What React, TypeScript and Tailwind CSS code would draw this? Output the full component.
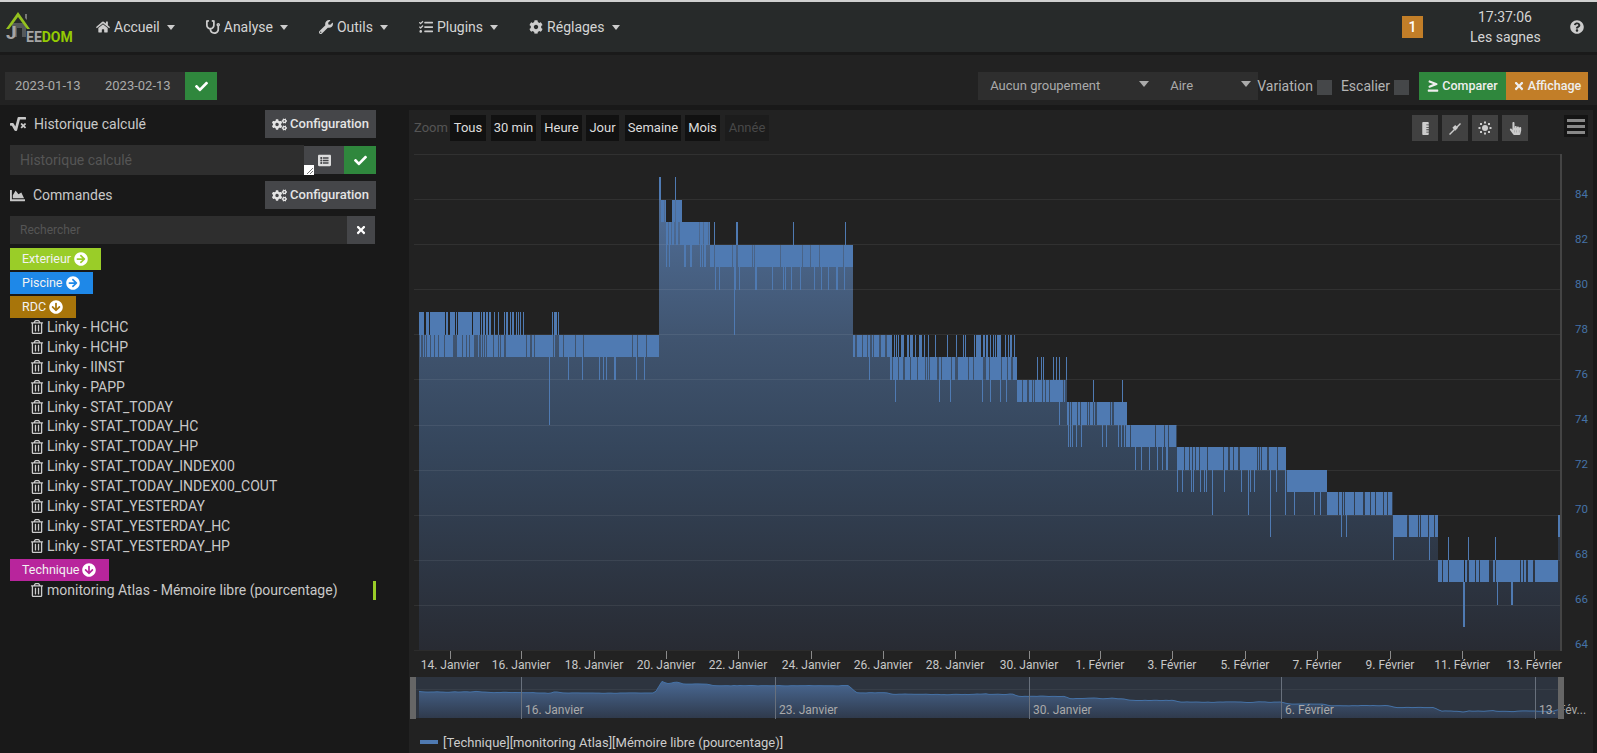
import {
  FaArrowCircleDown,
  FaArrowCircleRight,
  FaChartArea,
  FaCheck,
  FaCog,
  FaCogs,
  FaGreaterThanEqual,
  FaHandPointer,
  FaHome,
  FaListAlt,
  FaQuestionCircle,
  FaRegTrashAlt,
  FaRulerVertical,
  FaSquareRootAlt,
  FaStethoscope,
  FaTasks,
  FaTimes,
  FaWrench,
} from "react-icons/fa"
import type { ReactNode } from "react"

const yOf = (v: number) => 649.6 - (v - 64) * 22.5

// x0, x1, level, main band, tooth above, spike below
const segments: [number, number, number, number, number, number][] = [
  [419, 485, 78, 0.55, 0.8, 0],
  [485, 524, 78, 0.8, 0.4, 0],
  [524, 552, 78, 0.8, 0.02, 0],
  [552, 559, 78, 0.5, 0.9, 0],
  [559, 659, 78, 0.93, 0, 0.06],
  [659, 666, 84, 0.95, 0, 0.5],
  [666, 672, 83, 0.9, 0, 0.5],
  [672, 682, 84, 0.95, 0, 0.6],
  [682, 710, 83, 0.85, 0, 0.5],
  [710, 853, 82, 0.93, 0.02, 0.12],
  [853, 858, 78, 0.5, 0, 0],
  [858, 890, 78, 0.9, 0, 0.25],
  [890, 1017, 77, 0.85, 0.3, 0.06],
  [1017, 1067, 76, 0.85, 0.1, 0.1],
  [1067, 1127, 75, 0.75, 0.05, 0.2],
  [1127, 1177, 74, 0.85, 0, 0.2],
  [1177, 1286, 73, 0.85, 0, 0.12],
  [1286, 1327, 72, 0.96, 0, 0.05],
  [1327, 1393, 71, 0.85, 0, 0.05],
  [1393, 1438, 70, 0.85, 0, 0.04],
  [1438, 1558, 68, 0.9, 0, 0.05],
  [1558, 1560, 70, 1, 0, 0],
]

// single columns read off the picture: x, high, low
const spikes: [number, number, number][] = [
  [549, 78, 74], [734, 82, 78], [659, 85, 84], [660, 85, 84], [675, 85, 84], [714, 83, 82], [736, 83, 82], [737, 83, 82],
  [1177, 73, 71], [1193, 73, 71], [1212, 73, 70], [1248, 73, 70], [1270, 73, 69], [1285, 73, 70], [1346, 71, 69],
  [1393, 70, 68], [1429, 70, 68], [1448, 69, 68], [1468, 69, 68], [1495, 69, 68], [1463, 68, 65], [1464, 67, 65],
  [1489, 68, 68], [1490, 68, 68], [1491, 68, 68], [1492, 68, 68],
]

function buildSeries() {
  let seed = 20230213
  const rnd = () => {
    seed = (seed + 0x6d2b79f5) | 0
    let t = Math.imul(seed ^ (seed >>> 15), 1 | seed)
    t = (t + Math.imul(t ^ (t >>> 7), 61 | t)) ^ t
    return ((t ^ (t >>> 14)) >>> 0) / 4294967296
  }
  const cols: { x: number; hi: number; lo: number }[] = []
  for (const [x0, x1, level, main, up, down] of segments) {
    for (let x = x0; x < x1; x++) {
      let hi = level
      let lo = level
      if (rnd() < main) lo = level - 1
      if (rnd() < up) hi = level + 1
      if (lo < level && rnd() < down) lo = level - 2
      const spike = spikes.find((s) => s[0] === x)
      if (spike) {
        hi = spike[1]
        lo = spike[2]
      }
      cols.push({ x, hi, lo })
    }
  }
  let fill = ""
  let line = ""
  for (const c of cols) {
    const top = yOf(c.hi).toFixed(1)
    fill += `M${c.x} ${top}H${c.x + 1}V650H${c.x}Z`
    if (c.hi !== c.lo) line += `M${c.x + 0.5} ${top}V${yOf(c.lo).toFixed(1)}`
  }
  let nav = "M419 718"
  for (let i = 0; i < cols.length; i += 3) {
    const part = cols.slice(Math.max(0, i - 3), i + 4)
    const v = part.reduce((a, c) => a + (c.hi + c.lo) / 2, 0) / part.length
    nav += `L${cols[i].x} ${(693 - (v - 77.5) * 1.83).toFixed(1)}`
  }
  const navLine = nav.replace("M419 718L", "M")
  return { fill, line, nav: nav + "L1558 718Z", navLine }
}

const series = buildSeries()

const grid = [154, 199, 244, 289, 334, 379, 425, 470, 515, 560, 605]
const yLabels = [84, 82, 80, 78, 76, 74, 72, 70, 68, 66, 64]
const xLabels: [number, string][] = [
  [450, "14. Janvier"], [521, "16. Janvier"], [594, "18. Janvier"], [666, "20. Janvier"], [738, "22. Janvier"],
  [811, "24. Janvier"], [883, "26. Janvier"], [955, "28. Janvier"], [1029, "30. Janvier"], [1100, "1. Février"],
  [1172, "3. Février"], [1245, "5. Février"], [1317, "7. Février"], [1390, "9. Février"], [1462, "11. Février"],
  [1534, "13. Février"],
]
const navLabels: [number, string][] = [
  [521, "16. Janvier"], [775, "23. Janvier"], [1029, "30. Janvier"], [1281, "6. Février"], [1535, "13. Fév..."],
]

const linky = [
  "HCHC", "HCHP", "IINST", "PAPP", "STAT_TODAY", "STAT_TODAY_HC", "STAT_TODAY_HP", "STAT_TODAY_INDEX00",
  "STAT_TODAY_INDEX00_COUT", "STAT_YESTERDAY", "STAT_YESTERDAY_HC", "STAT_YESTERDAY_HP",
]

function Caret() {
  return <span className="ml-[7px] mt-[1px] border-x-[4px] border-t-[5px] border-x-transparent border-t-[#ccc]" />
}

function NavItem({ icon, label }: { icon: ReactNode; label: string }) {
  return (
    <div className="flex items-center text-[14px] text-[#d4d4d4]">
      <span className="mr-[4px] text-[14px] text-[#ccc]">{icon}</span>
      {label}
      <Caret />
    </div>
  )
}

function Logo() {
  return (
    <div className="relative h-[32px] w-[90px]">
      <svg width="30" height="32" viewBox="0 0 30 32">
        <path d="M6 12h14v14H6z" fill="#55595a" />
        <path d="M11 17h5v9h-5z" fill="#272a2a" />
        <path d="M0 18L12 1l12 17-3 0-9-12-9 12z" fill="#94c11f" />
        <path d="M19 3h2v6l-2-2z" fill="#777" />
      </svg>
      <span className="absolute left-[0px] top-[11px] text-[19px] font-bold leading-[22px] text-[#a5a5a5]">J</span>
      <span className="absolute left-[20px] top-[19px] text-[14px] font-bold leading-[14px]">
        <span className="text-[#a5a5a5]">EE</span>
        <span className="text-[#94ca02]">DOM</span>
      </span>
    </div>
  )
}

function ConfigButton() {
  return (
    <div className="flex h-[28px] w-[111px] items-center justify-center gap-[3px] bg-[#454649] text-[13px] font-medium text-[#e4e4e4]">
      <FaCogs className="text-[15px]" />
      Configuration
    </div>
  )
}

function Tag({ color, label, open }: { color: string; label: string; open?: boolean }) {
  return (
    <div className={`flex h-[22px] w-fit items-center gap-[3px] pl-[12px] pr-[13px] text-[12.5px] text-[#f2f2f2] ${color}`}>
      {label}
      {open ? <FaArrowCircleDown className="text-[14px] text-white" /> : <FaArrowCircleRight className="text-[14px] text-white" />}
    </div>
  )
}

function Cmd({ label, tall }: { label: string; tall?: boolean }) {
  return (
    <div className={`flex items-center pl-[20px] text-[14px] text-[#c8c8c8] ${tall ? "h-[19px]" : "h-[19.9px]"}`}>
      <FaRegTrashAlt className="mr-[3px] text-[14px] text-[#ccc]" />
      {label}
    </div>
  )
}

function RangeButton({ label, width, off }: { label: string; width: string; off?: boolean }) {
  return (
    <div className={`flex h-[26px] items-center justify-center text-[13px] ${width} ${off ? "bg-[#1c1c1c] text-[#484848]" : "bg-[#111] text-[#ddd]"}`}>
      {label}
    </div>
  )
}

function ToolButton({ children }: { children: ReactNode }) {
  return <div className="flex h-[26px] w-[26px] items-center justify-center bg-[#414141] text-[13px] text-[#ccc]">{children}</div>
}

function Chart() {
  return (
    <svg width="1184" height="603" viewBox="409 150 1184 603" className="block">
      <defs>
        <linearGradient id="area" gradientUnits="userSpaceOnUse" x1="0" y1="180" x2="0" y2="650">
          <stop offset="0" stopColor="#52729e" />
          <stop offset="0.34" stopColor="#40546f" />
          <stop offset="0.57" stopColor="#35465c" />
          <stop offset="1" stopColor="#282b33" />
        </linearGradient>
        <linearGradient id="navArea" gradientUnits="userSpaceOnUse" x1="0" y1="680" x2="0" y2="718">
          <stop offset="0" stopColor="#4a6a96" />
          <stop offset="1" stopColor="#2f3a4c" />
        </linearGradient>
      </defs>
      <path d={series.fill} fill="url(#area)" shapeRendering="crispEdges" />
      {grid.map((y) => (
        <rect key={y} x="414" y={y} width="1146" height="1" fill="#fff" fillOpacity="0.07" />
      ))}
      <path d={series.line} stroke="#4f7ab2" strokeWidth="1" fill="none" shapeRendering="crispEdges" />
      <rect x="1560" y="154" width="2" height="497" fill="#444" />
      <rect x="414" y="650" width="1146" height="1" fill="#2c2c2c" />
      {yLabels.map((v) => (
        <text key={v} x="1588" y={yOf(v) - 2} textAnchor="end" fontSize="11.5" fill="#4572a7">
          {v}
        </text>
      ))}
      {xLabels.map(([x, label]) => (
        <g key={label}>
          <rect x={x} y="651" width="1" height="8" fill="#8a8a8a" />
          <text x={x} y="669" textAnchor="middle" fontSize="12" fill="#c8c8c8">
            {label}
          </text>
        </g>
      ))}

      <rect x="416" y="677" width="1142" height="41" fill="#2d343f" />
      <rect x="416" y="689" width="1142" height="1" fill="#fff" fillOpacity="0.05" />
      <path d={series.nav} fill="url(#navArea)" />
      <path d={series.navLine} stroke="#4572a7" fill="none" />
      {navLabels.map(([x, label]) => (
        <g key={label}>
          <rect x={x} y="677" width="1" height="42" fill="#68707c" />
          <text x={x + 4} y="714" fontSize="12" fill="#aaa">
            {label}
          </text>
        </g>
      ))}
      <rect x="410" y="677" width="6" height="42" fill="#666" />
      <rect x="1558" y="677" width="6" height="42" fill="#666" />

      <rect x="420" y="740" width="18" height="4" fill="#4f7ab2" />
      <text x="443" y="746.5" fontSize="13" fill="#ccc">
        [Technique][monitoring Atlas][Mémoire libre (pourcentage)]
      </text>
    </svg>
  )
}

export default function App() {
  return (
    <div className="flex h-[753px] w-[1597px] flex-col overflow-hidden bg-[#191919] font-['Roboto',sans-serif]">
      <div className="h-[2px] bg-[#d0d0d0]" />

      {/* navbar */}
      <div className="flex h-[50px] items-center bg-[#272a2a] pl-[6px]">
        <Logo />
        <div className="flex gap-[31px]">
          <NavItem icon={<FaHome />} label="Accueil" />
          <NavItem icon={<FaStethoscope />} label="Analyse" />
          <NavItem icon={<FaWrench />} label="Outils" />
          <NavItem icon={<FaTasks />} label="Plugins" />
          <NavItem icon={<FaCog />} label="Réglages" />
        </div>
        <div className="ml-auto flex h-[22px] w-[21px] items-center justify-center bg-[#c27e28] text-[14px] font-medium text-white">1</div>
        <div className="ml-[47px] w-[70px] text-center text-[14px] leading-[20px] text-[#d4d4d4]">
          <div>17:37:06</div>
          <div className="whitespace-nowrap">Les sagnes</div>
        </div>
        <FaQuestionCircle className="ml-[30px] mr-[13px] text-[14px] text-[#ccc]" />
      </div>
      <div className="h-[3px] bg-[#1a1a1a]" />

      {/* period and display options */}
      <div className="flex h-[50px] items-start bg-[#222] pl-[5px] pr-[9px] pt-[17px] text-[13px] text-[#aaa]">
        <div className="flex h-[28px] w-[90px] items-center bg-[#2e2e2e] pl-[10px]">2023-01-13</div>
        <div className="flex h-[28px] w-[90px] items-center bg-[#2e2e2e] pl-[10px]">2023-02-13</div>
        <div className="flex h-[28px] w-[32px] items-center justify-center bg-[#2f873d] text-[13px] text-white">
          <FaCheck />
        </div>

        <div className="ml-auto flex h-[28px] w-[180px] items-center justify-between bg-[#2e2e2e] pl-[12px] pr-[9px]">
          Aucun groupement
          <span className="mb-[5px] border-x-[5.5px] border-t-[6px] border-x-transparent border-t-[#aaa]" />
        </div>
        <div className="flex h-[28px] w-[100px] items-center justify-between bg-[#2e2e2e] pl-[12px] pr-[7px]">
          Aire
          <span className="mb-[5px] border-x-[5.5px] border-t-[6px] border-x-transparent border-t-[#aaa]" />
        </div>
        <div className="-ml-[1px] flex h-[28px] items-center text-[14px] text-[#b4b4b4]">
          Variation
          <span className="ml-[4px] mt-[2px] h-[15px] w-[15px] bg-[#454749]" />
          <span className="ml-[9px]">Escalier</span>
          <span className="ml-[4px] mt-[2px] h-[15px] w-[15px] bg-[#454749]" />
        </div>
        <div className="ml-[10px] flex h-[28px] w-[87px] items-center justify-center gap-[3px] bg-[#2f873d] text-[12.5px] font-medium text-[#eee]">
          <FaGreaterThanEqual className="text-[12px]" />
          Comparer
        </div>
        <div className="flex h-[28px] w-[82px] items-center justify-center gap-[3px] bg-[#c27e28] text-[12.5px] font-medium text-[#eee]">
          <FaTimes className="text-[12px]" />
          Affichage
        </div>
      </div>

      <div className="flex min-h-0 flex-1">
        {/* left column */}
        <div className="w-[409px] shrink-0 pl-[10px] pr-[33px] pt-[5px]">
          <div className="flex h-[28px] items-center justify-between">
            <div className="flex items-center text-[14px] text-[#c8c8c8]">
              <FaSquareRootAlt className="mr-[8px] text-[16px]" />
              Historique calculé
            </div>
            <ConfigButton />
          </div>
          <div className="relative mt-[7px] flex h-[30px] items-center">
            <div className="flex h-[30px] w-[294px] items-center bg-[#2e2e2e] pl-[10px] text-[14px] text-[#555]">Historique calculé</div>
            <div className="flex h-[28px] w-[40px] items-center justify-center bg-[#454649] text-[13px] text-[#ddd]">
              <FaListAlt />
            </div>
            <div className="flex h-[28px] w-[32px] items-center justify-center bg-[#2f873d] text-[13px] text-white">
              <FaCheck />
            </div>
            <div className="absolute left-[294px] top-[20px] h-[10px] w-[10px] bg-white">
              <svg width="10" height="10" viewBox="0 0 10 10">
                <path d="M3 9l6-6M6 9l3-3" stroke="#777" strokeWidth="1" />
              </svg>
            </div>
          </div>
          <div className="mt-[6px] flex h-[28px] items-center justify-between">
            <div className="flex items-center text-[14px] text-[#c8c8c8]">
              <FaChartArea className="mr-[8px] text-[15px]" />
              Commandes
            </div>
            <ConfigButton />
          </div>
          <div className="mt-[7px] flex h-[28px] w-[365px]">
            <div className="flex flex-1 items-center bg-[#2e2e2e] pl-[10px] text-[12px] text-[#555]">Rechercher</div>
            <div className="flex w-[28px] items-center justify-center bg-[#454649] text-[12px] text-white">
              <FaTimes />
            </div>
          </div>

          <div className="mt-[4px] flex flex-col gap-[2px]">
            <Tag color="bg-[#9acd28]" label="Exterieur" />
            <Tag color="bg-[#1e88e8]" label="Piscine" />
            <Tag color="bg-[#a8750a]" label="RDC" open />
          </div>
          <div className="-mt-[0.5px]">
            {linky.map((name) => (
              <Cmd key={name} label={`Linky - ${name}`} />
            ))}
          </div>
          <div className="mt-[2.7px]">
            <Tag color="bg-[#b8259c]" label="Technique" open />
          </div>
          <div className="flex items-stretch justify-between">
            <Cmd label="monitoring Atlas - Mémoire libre (pourcentage)" tall />
            <span className="w-[3px] bg-[#9acd28]" />
          </div>
        </div>

        {/* chart column */}
        <div className="flex min-w-0 flex-1 flex-col pr-[4px] pt-[5px]">
          <div className="flex h-[40px] flex-col bg-[#222] pt-[5px]">
            <div className="flex items-center pl-[5px] pr-[5px]">
              <span className="w-[36px] text-[13px] text-[#555]">Zoom</span>
              <RangeButton label="Tous" width="w-[36px]" />
              <span className="w-[5px]" />
              <RangeButton label="30 min" width="w-[45px]" />
              <span className="w-[5px]" />
              <RangeButton label="Heure" width="w-[41px]" />
              <span className="w-[4px]" />
              <RangeButton label="Jour" width="w-[33px]" />
              <span className="w-[6px]" />
              <RangeButton label="Semaine" width="w-[56px]" />
              <span className="w-[4px]" />
              <RangeButton label="Mois" width="w-[35px]" />
              <span className="w-[5px]" />
              <RangeButton label="Année" width="w-[44px]" off />
              <div className="ml-auto flex gap-[4px]">
                <ToolButton>
                  <FaRulerVertical />
                </ToolButton>
                <ToolButton>
                  <svg width="14" height="14" viewBox="0 0 14 14" fill="#ccc">
                    <path d="M1 13l5-5 1 1-5 5zM7 7l5-5 1 1-5 5z" />
                    <rect x="5.2" y="4.8" width="4" height="4" transform="rotate(45 7.2 6.8)" />
                  </svg>
                </ToolButton>
                <ToolButton>
                  <svg width="14" height="14" viewBox="0 0 14 14" fill="#ccc">
                    <circle cx="7" cy="7" r="3" />
                    <rect x="6" y="0.5" width="2" height="2" />
                    <rect x="6" y="11.5" width="2" height="2" />
                    <rect x="0.5" y="6" width="2" height="2" />
                    <rect x="11.5" y="6" width="2" height="2" />
                    <rect x="2" y="2" width="2" height="2" />
                    <rect x="10" y="2" width="2" height="2" />
                    <rect x="2" y="10" width="2" height="2" />
                    <rect x="10" y="10" width="2" height="2" />
                  </svg>
                </ToolButton>
                <ToolButton>
                  <FaHandPointer />
                </ToolButton>
              </div>
              <div className="ml-[36px] flex h-[22px] w-[24px] flex-col items-center justify-center gap-[3px] self-start bg-[#141414]">
                <span className="h-[3px] w-[18px] bg-[#888]" />
                <span className="h-[3px] w-[18px] bg-[#888]" />
                <span className="h-[3px] w-[18px] bg-[#888]" />
              </div>
            </div>
          </div>
          <div className="min-h-0 flex-1 bg-[#222]">
            <Chart />
          </div>
        </div>
      </div>
    </div>
  )
}
